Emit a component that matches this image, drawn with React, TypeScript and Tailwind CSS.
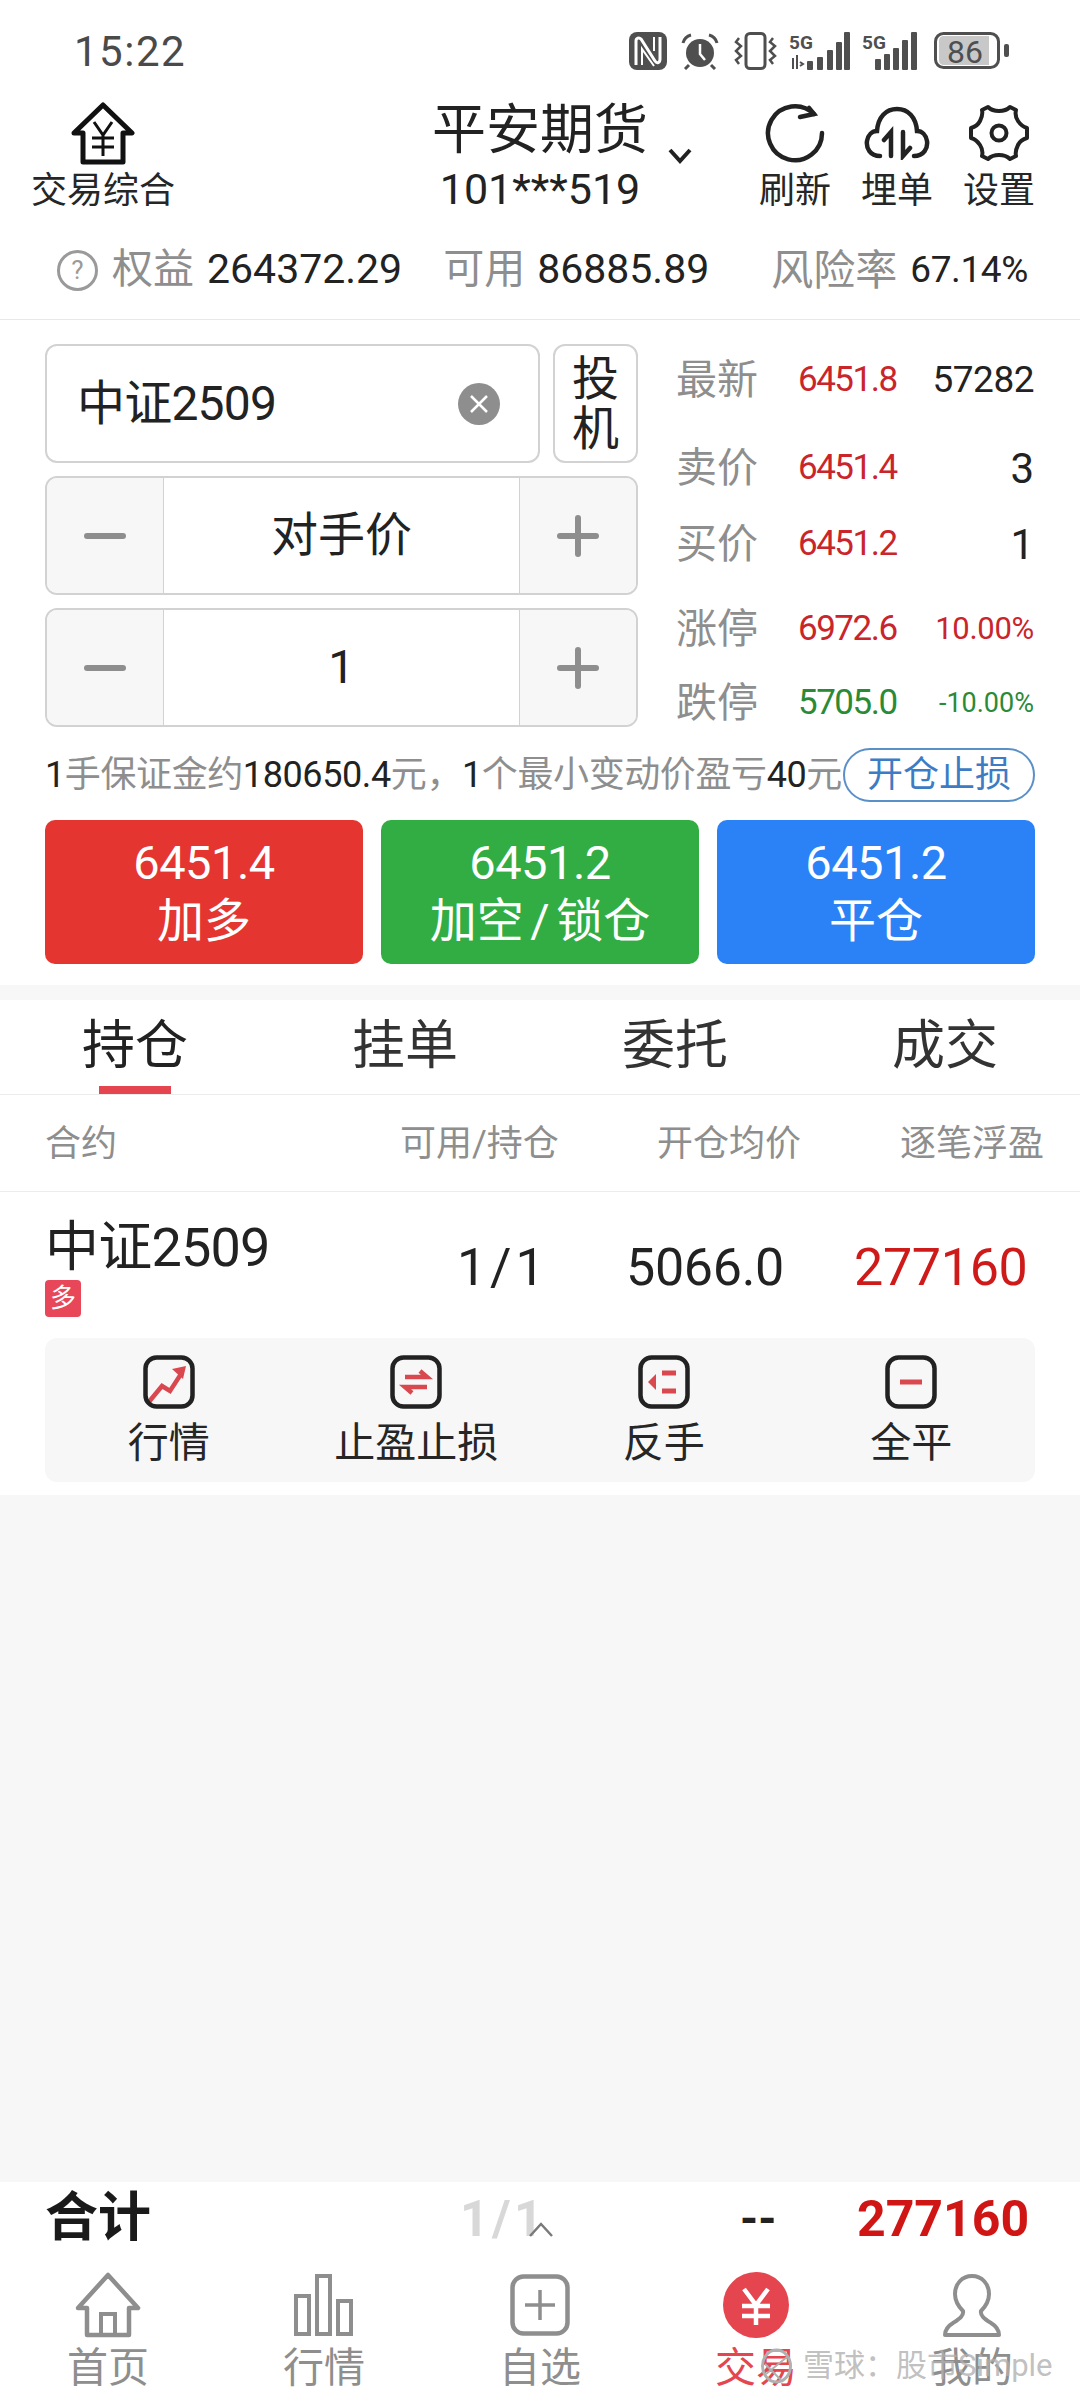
import type { ReactNode } from "react";

const GRAY = "text-[#8e8e8e]";

function StatusIcons() {
  return (
    <div className="flex items-center h-[38px] text-[#4f4f4f]">
      {/* nfc */}
      <svg width="38" height="38" viewBox="0 0 38 38" className="mr-[14px]">
        <rect x="0" y="0" width="38" height="38" rx="8" fill="#4f4f4f" />
        <path d="M7 33V9c0-3 3-4 5-2l14 22c2 3 5 2 5-2V5" stroke="#fff" strokeWidth="3" fill="none" />
        <path d="M13 33V17l12 17M25 5v14" stroke="#fff" strokeWidth="2" fill="none" />
      </svg>
      {/* alarm */}
      <svg width="38" height="38" viewBox="0 0 38 38" className="mr-[14px]">
        <circle cx="19" cy="21" r="14" fill="#4f4f4f" />
        <path d="M2 11c1-4 4-7 8-8M36 11c-1-4-4-7-8-8M8 33l-4 4M30 33l4 4" stroke="#4f4f4f" strokeWidth="3" fill="none" />
        <path d="M19 12v10l5 6" stroke="#fff" strokeWidth="2.5" fill="none" />
      </svg>
      {/* vibrate */}
      <svg width="46" height="38" viewBox="0 0 46 38" className="mr-[10px]">
        <rect x="13" y="1.5" width="19" height="35" rx="4" fill="none" stroke="#4f4f4f" strokeWidth="3" />
        <path d="M6 6l-3 4 5 4-5 5 5 5-5 4 3 4M40 6l-3 4 5 4-5 5 5 5-5 4 3 4" stroke="#4f4f4f" strokeWidth="2.5" fill="none" />
      </svg>
      {/* sim 1 */}
      <svg width="62" height="38" viewBox="0 0 62 38" className="mr-[11px]">
        <text x="0" y="17" fontSize="19" fontWeight="700" fontFamily="Roboto" fill="#4f4f4f">5G</text>
        <path d="M4 37V26M8 37V23M11 30l3 2-3 2" stroke="#4f4f4f" strokeWidth="2" fill="none" />
        <rect x="18" y="29" width="6" height="9" rx="1" fill="#4f4f4f" />
        <rect x="28" y="25" width="6" height="13" rx="1" fill="#4f4f4f" />
        <rect x="38" y="18" width="6" height="20" rx="1" fill="#4f4f4f" />
        <rect x="47" y="10" width="6" height="28" rx="1" fill="#4f4f4f" />
        <rect x="55" y="0" width="6" height="38" rx="1" fill="#4f4f4f" />
      </svg>
      {/* sim 2 */}
      <svg width="56" height="38" viewBox="0 0 56 38" className="mr-[16px]">
        <text x="0" y="17" fontSize="19" fontWeight="700" fontFamily="Roboto" fill="#4f4f4f">5G</text>
        <rect x="13" y="27" width="6" height="11" rx="1" fill="#4f4f4f" />
        <rect x="22" y="22" width="6" height="16" rx="1" fill="#4f4f4f" />
        <rect x="31" y="16" width="6" height="22" rx="1" fill="#4f4f4f" />
        <rect x="40" y="8" width="6" height="30" rx="1" fill="#4f4f4f" />
        <rect x="49" y="0" width="6" height="38" rx="1" fill="#4f4f4f" />
      </svg>
      {/* battery */}
      <svg width="76" height="38" viewBox="0 0 76 38">
        <rect x="1.5" y="1.5" width="63" height="34" rx="8" fill="#fff" stroke="#4f4f4f" strokeWidth="3" />
        <path d="M5 8a5 5 0 0 1 5-4h45v29H10a5 5 0 0 1-5-4z" fill="#c8c8c8" />
        <rect x="70" y="12" width="5" height="13" rx="2" fill="#4f4f4f" />
        <text x="13" y="31" fontSize="32" fontFamily="Roboto" fill="#4f4f4f">86</text>
      </svg>
    </div>
  );
}

function ToolButton({ label, children }: { label: string; children: ReactNode }) {
  return (
    <div className="flex flex-col items-center w-[70px]">
      <div className="h-[62px] flex items-center justify-center">{children}</div>
      <span className="text-[36px] leading-[44px] text-[#262626] mt-[5px] whitespace-nowrap">{label}</span>
    </div>
  );
}

function Stepper({ value }: { value: string }) {
  return (
    <div className="flex h-[119px] rounded-[12px] border-2 border-[#d2d2d2] overflow-hidden">
      <div className="w-[117px] bg-[#f7f7f7] flex items-center justify-center border-r border-[#d2d2d2]">
        <div className="w-[42px] h-[6px] rounded-full bg-[#8e8e8e]" />
      </div>
      <div className="flex-1 flex items-center justify-center text-[47px] text-[#222]">{value}</div>
      <div className="w-[117px] bg-[#f7f7f7] flex items-center justify-center border-l border-[#d2d2d2] relative">
        <div className="w-[42px] h-[6px] rounded-full bg-[#8e8e8e]" />
        <div className="absolute w-[6px] h-[42px] rounded-full bg-[#8e8e8e]" />
      </div>
    </div>
  );
}

function Quote({ label, price, extra, priceColor, extraClass, className }: { label: string; price: string; extra: string; priceColor: string; extraClass: string; className: string }) {
  return (
    <div className={`flex items-center ${className}`}>
      <span className={`text-[41px] leading-[50px] ${GRAY} w-[122px]`}>{label}</span>
      <span className={`text-[35px] tracking-[-1.5px] w-[112px] ${priceColor}`}>{price}</span>
      <span className={`flex-1 text-right ${extraClass}`}>{extra}</span>
    </div>
  );
}

function TradeButton({ price, label, color }: { price: string; label: string; color: string }) {
  return (
    <div className={`flex-1 h-[144px] rounded-[10px] flex flex-col items-center justify-center text-white ${color}`}>
      <span className="text-[47px] leading-[58px] tracking-[-0.5px]">{price}</span>
      <span className="text-[47px] leading-[58px] [word-spacing:-5px]">{label}</span>
    </div>
  );
}

function ActionIcon({ children }: { children: ReactNode }) {
  return (
    <svg width="52" height="54" viewBox="0 0 52 54">
      {children}
      <rect x="2.5" y="2.5" width="47" height="49" rx="11" fill="none" stroke="#222" strokeWidth="4.5" />
    </svg>
  );
}

function Action({ label, children }: { label: string; children: ReactNode }) {
  return (
    <div className="flex-1 flex flex-col items-center">
      {children}
      <span className="text-[41px] leading-[50px] text-[#262626] mt-[9px] whitespace-nowrap">{label}</span>
    </div>
  );
}

function NavItem({ label, active, children }: { label: string; active?: boolean; children: ReactNode }) {
  return (
    <div className="w-[216px] flex flex-col items-center">
      <div className="h-[70px] flex items-center justify-center">{children}</div>
      <span className={`text-[41px] leading-[48px] mt-[4px] ${active ? "text-[#e5454f]" : GRAY}`}>{label}</span>
    </div>
  );
}

export default function App() {
  return (
    <div className="relative w-[1080px] h-[2400px] overflow-hidden bg-[#f7f7f7] flex flex-col font-[family-name:Roboto,'Noto_Sans_CJK_SC',sans-serif]">
      <div className="bg-white">
        {/* status bar */}
        <div className="h-[90px] flex items-center justify-between pl-[74px] pr-[70px] pt-[12px]">
          <span className="text-[42px] tracking-[1.5px] text-[#4a4a4a]">15:22</span>
          <StatusIcons />
        </div>

        {/* title row */}
        <div className="h-[126px] flex items-start">
          <div className="w-[206px] flex flex-col items-center pt-[12px]">
            <svg width="66" height="64" viewBox="0 0 66 64">
              <path d="M33 3 L62 31 H53 V60 H13 V31 H4 Z" fill="none" stroke="#111" strokeWidth="5" strokeLinejoin="round" />
              <path d="M24 20l9 13 9-13M22 36h22M22 45h22M33 33v21" fill="none" stroke="#111" strokeWidth="3" />
            </svg>
            <span className="text-[36px] leading-[44px] text-[#262626] mt-[3px] whitespace-nowrap">交易综合</span>
          </div>
          <div className="w-[226px]" />
          <div className="w-[216px] flex flex-col items-center pt-[8px]">
            <span className="text-[54px] leading-[66px] text-[#222] whitespace-nowrap">平安期货</span>
            <span className="text-[43px] leading-[50px] text-[#222] whitespace-nowrap">101***519</span>
          </div>
          <svg width="26" height="18" viewBox="0 0 26 18" className="ml-[19px] mt-[57px]">
            <path d="M3 3l10 11L23 3" fill="none" stroke="#222" strokeWidth="4" />
          </svg>
          <div className="flex ml-[67px] gap-[32px] pt-[12px]">
            <ToolButton label="刷新">
              <svg width="62" height="62" viewBox="0 0 62 62">
                <path d="M58 31A27 27 0 1 1 50 12" fill="none" stroke="#222" strokeWidth="4.5" strokeLinecap="round" />
                <path d="M36 15l14-3-5-6" fill="none" stroke="#222" strokeWidth="4.5" strokeLinecap="round" />
              </svg>
            </ToolButton>
            <ToolButton label="埋单">
              <svg width="66" height="54" viewBox="0 0 66 54">
                <path d="M16 50C6 50 2 42 3 35c1-6 5-10 10-10C14 11 22 3 33 3s19 8 20 22c5 0 9 4 10 10 1 7-3 15-13 15" fill="none" stroke="#222" strokeWidth="4.5" strokeLinecap="round" />
                <path d="M27 50V26l-7 8M39 26v24l7-8" fill="none" stroke="#222" strokeWidth="4.5" strokeLinecap="round" />
              </svg>
            </ToolButton>
            <ToolButton label="设置">
              <svg width="60" height="60" viewBox="0 0 60 60">
                <path d="M19 4c3 3 7 4 11 4s8-1 11-4l6 3c-1 4 0 8 2 11s5 6 9 7v10c-4 1-7 3-9 7s-3 7-2 11l-6 3c-3-3-7-4-11-4s-8 1-11 4l-6-3c1-4 0-8-2-11s-5-6-9-7V25c4-1 7-3 9-7s3-7 2-11z" fill="none" stroke="#222" strokeWidth="4" strokeLinejoin="round" />
                <circle cx="30" cy="30" r="7.5" fill="none" stroke="#222" strokeWidth="4" />
              </svg>
            </ToolButton>
          </div>
        </div>

        {/* account row */}
        <div className="h-[104px] flex items-center border-b border-[#e8e8e8] pl-[57px] pt-[5px] text-[#222]">
          <div className="w-[41px] h-[41px] rounded-full border-[3px] border-[#9a9a9a] flex items-center justify-center text-[26px] text-[#9a9a9a]">?</div>
          <span className={`text-[41px] ml-[14px] ${GRAY}`}>权益</span>
          <span className="text-[41px] ml-[13px]">264372.29</span>
          <span className={`text-[41px] ml-[41px] ${GRAY}`}>可用</span>
          <span className="text-[41px] ml-[12px]">86885.89</span>
          <span className={`text-[42px] ml-[62px] ${GRAY}`}>风险率</span>
          <span className="text-[37px] tracking-[-0.4px] ml-[13px]">67.14%</span>
        </div>

        {/* order form */}
        <div className="flex px-[45px] pt-[24px]">
          <div className="w-[593px] flex flex-col gap-[13px]">
            <div className="flex gap-[13px]">
              <div className="flex-1 h-[119px] rounded-[12px] border-2 border-[#d2d2d2] flex items-center pl-[30px] pr-[38px]">
                <span className="flex-1 text-[48px] tracking-[-0.8px] text-[#222]">中证2509</span>
                <div className="w-[42px] h-[42px] rounded-full bg-[#8e8e8e] flex items-center justify-center">
                  <svg width="22" height="22" viewBox="0 0 22 22">
                    <path d="M3 3l16 16M19 3L3 19" stroke="#fff" strokeWidth="2.5" />
                  </svg>
                </div>
              </div>
              <div className="w-[85px] h-[119px] rounded-[12px] border-2 border-[#d2d2d2] flex items-center justify-center text-center text-[47px] leading-[50px] text-[#222]">投<br />机</div>
            </div>
            <Stepper value="对手价" />
            <Stepper value="1" />
          </div>

          <div className="w-[358px] ml-[38px] flex flex-col">
            <Quote label="最新" price="6451.8" extra="57282" priceColor="text-[#c9252a]" extraClass="text-[37px] tracking-[-0.5px] text-[#222]" className="h-[72px]" />
            <Quote label="卖价" price="6451.4" extra="3" priceColor="text-[#c9252a]" extraClass="text-[42px] text-[#222]" className="h-[72px] mt-[16px]" />
            <Quote label="买价" price="6451.2" extra="1" priceColor="text-[#c9252a]" extraClass="text-[42px] text-[#222]" className="h-[72px] mt-[4px]" />
            <Quote label="涨停" price="6972.6" extra="10.00%" priceColor="text-[#c9252a]" extraClass="text-[31px] tracking-[-0.3px] text-[#c9252a]" className="h-[72px] mt-[13px]" />
            <Quote label="跌停" price="5705.0" extra="-10.00%" priceColor="text-[#2b8a36]" extraClass="text-[27px] text-[#2b8a36]" className="h-[72px] mt-[2px]" />
          </div>
        </div>

        {/* margin hint */}
        <div className="flex items-center justify-between px-[45px] h-[54px] mt-[9px]">
          <span className="text-[36px] whitespace-nowrap tracking-[-0.4px] text-[#8e8e8e]">
            <span className="text-[#222]">1</span>手保证金约<span className="text-[#222]">180650.4</span>元，<span className="text-[#222]">1</span>个最小变动价盈亏<span className="text-[#222]">40</span>元
          </span>
          <span className="w-[192px] h-[54px] rounded-full border-2 border-[#5b8fc7] flex items-center justify-center text-[36px] text-[#3d7cc4] whitespace-nowrap">开仓止损</span>
        </div>

        {/* trade buttons */}
        <div className="flex gap-[18px] px-[45px] mt-[18px] pb-[21px]">
          <TradeButton price="6451.4" label="加多" color="bg-[#e53531]" />
          <TradeButton price="6451.2" label="加空 / 锁仓" color="bg-[#32ad44]" />
          <TradeButton price="6451.2" label="平仓" color="bg-[#2a82f6]" />
        </div>
      </div>

      <div className="h-[15px] shrink-0" />

      <div className="bg-white">
        {/* tabs */}
        <div className="h-[95px] flex border-b border-[#ececec] text-[53px] text-[#333]">
          <div className="w-[270px] relative flex items-center justify-center text-[#222]">
            <span>持仓</span>
            <div className="absolute bottom-0 left-[99px] w-[72px] h-[8px] bg-[#e5454f]" />
          </div>
          <div className="w-[270px] flex items-center justify-center">挂单</div>
          <div className="w-[270px] flex items-center justify-center">委托</div>
          <div className="w-[270px] flex items-center justify-center">成交</div>
        </div>

        {/* column header */}
        <div className="h-[97px] flex items-center border-b border-[#ececec] pl-[45px] pt-[2px] text-[36px] text-[#8e8e8e]">
          <span className="w-[355px]">合约</span>
          <span className="w-[257px] whitespace-nowrap">可用/持仓</span>
          <span className="w-[243px] whitespace-nowrap">开仓均价</span>
          <span className="whitespace-nowrap">逐笔浮盈</span>
        </div>

        {/* position */}
        <div className="h-[146px] flex px-[45px]">
          <div className="w-[412px] pt-[24px]">
            <div className="text-[54px] leading-[64px] tracking-[-0.8px] text-[#222]">中证2509</div>
            <div className="w-[36px] h-[37px] rounded-[4px] bg-[#e8475a] flex items-center justify-center text-[26px] text-white">多</div>
          </div>
          <div className="w-[169px] pt-[44px] text-[52px] leading-[64px] text-[#222] whitespace-nowrap [word-spacing:-9px]">1 / 1</div>
          <div className="w-[228px] pt-[44px] text-[52px] leading-[64px] text-[#222] tracking-[-0.3px]">5066.0</div>
          <div className="pt-[44px] text-[52px] leading-[64px] text-[#cf1a1a] tracking-[-0.3px]">277160</div>
        </div>

        <div className="px-[45px] pb-[13px]">
          <div className="h-[144px] rounded-[12px] bg-[#f7f7f7] flex items-start pt-[17px]">
            <Action label="行情">
              <ActionIcon>
                <path d="M5 48l14-17 8 5 11-17" fill="none" stroke="#d9484f" strokeWidth="4.5" />
                <path d="M29 14l14-3-3 13z" fill="#d9484f" />
              </ActionIcon>
            </Action>
            <Action label="止盈止损">
              <ActionIcon>
                <path d="M15 22h22l-7-6M37 32H15l7 6" fill="none" stroke="#d9484f" strokeWidth="4.5" />
              </ActionIcon>
            </Action>
            <Action label="反手">
              <ActionIcon>
                <path d="M18 19l-8 8 8 8z" fill="#d9484f" />
                <path d="M24 18h14M24 36h14" stroke="#d9484f" strokeWidth="5" />
              </ActionIcon>
            </Action>
            <Action label="全平">
              <ActionIcon>
                <path d="M15 27h22" stroke="#d9484f" strokeWidth="5" />
              </ActionIcon>
            </Action>
          </div>
        </div>
      </div>

      <div className="flex-1" />

      {/* bottom summary + nav */}
      <div className="bg-white h-[218px] shrink-0 relative">
        <div className="h-[88px] flex items-center pl-[45px] pb-[14px] font-bold">
          <span className="w-[415px] text-[53px] text-[#1a1a1a]">合计</span>
          <span className="w-[280px] text-[50px] text-[#d8d8d8] whitespace-nowrap [word-spacing:-9px]">1 / 1</span>
          <span className="w-[117px] text-[46px] text-[#222]">--</span>
          <span className="text-[50px] text-[#d01515]">277160</span>
        </div>
        <svg width="26" height="16" viewBox="0 0 26 16" className="absolute left-[528px] top-[40px]">
          <path d="M2 14L13 2l11 12" fill="none" stroke="#7a7a7a" strokeWidth="2.5" />
        </svg>

        <div className="flex">
          <NavItem label="首页">
            <svg width="66" height="66" viewBox="0 0 66 66">
              <path d="M33 3 L63 36 H54 V63 H12 V36 H3 Z" fill="none" stroke="#8e8e8e" strokeWidth="4.5" strokeLinejoin="round" />
              <path d="M26 63V42h14v21" fill="none" stroke="#8e8e8e" strokeWidth="4" />
            </svg>
          </NavItem>
          <NavItem label="行情">
            <svg width="62" height="62" viewBox="0 0 62 62">
              <rect x="3" y="22" width="13" height="38" fill="none" stroke="#8e8e8e" strokeWidth="4" />
              <rect x="24" y="2" width="13" height="58" fill="none" stroke="#8e8e8e" strokeWidth="4" />
              <rect x="45" y="27" width="13" height="33" fill="none" stroke="#8e8e8e" strokeWidth="4" />
            </svg>
          </NavItem>
          <NavItem label="自选">
            <svg width="60" height="62" viewBox="0 0 60 62">
              <rect x="2.5" y="2.5" width="55" height="57" rx="11" fill="none" stroke="#8e8e8e" strokeWidth="4.5" />
              <path d="M30 16v30M15 31h30" stroke="#8e8e8e" strokeWidth="3.5" />
            </svg>
          </NavItem>
          <NavItem label="交易" active>
            <svg width="66" height="66" viewBox="0 0 66 66">
              <circle cx="33" cy="33" r="33" fill="#e5454f" />
              <path d="M21 17l12 16 12-16M19 34h28M19 44h28M33 33v20" fill="none" stroke="#fff" strokeWidth="4.5" />
            </svg>
          </NavItem>
          <NavItem label="我的">
            <svg width="58" height="64" viewBox="0 0 58 64">
              <path d="M29 3c-10 0-17 8-17 18 0 8 4 13 8 17 1 5-4 8-10 12-5 3-8 6-8 12h54c0-6-3-9-8-12-6-4-11-7-10-12 4-4 8-9 8-17 0-10-7-18-17-18z" fill="none" stroke="#8e8e8e" strokeWidth="4" strokeLinejoin="round" />
            </svg>
          </NavItem>
        </div>
      </div>

      {/* watermark */}
      <div className="absolute left-[760px] top-[2346px] flex items-center gap-[10px] text-[#b0b0b0]/80 whitespace-nowrap">
        <svg width="33" height="36" viewBox="0 0 33 36">
          <ellipse cx="16.5" cy="18" rx="14" ry="16" fill="none" stroke="#b0b0b0" strokeWidth="3" />
          <path d="M6 26L27 9M5 16l16 16" stroke="#b0b0b0" strokeWidth="2" />
        </svg>
        <span className="text-[31px] leading-[40px]">雪球：股市Simple</span>
      </div>
    </div>
  );
}
